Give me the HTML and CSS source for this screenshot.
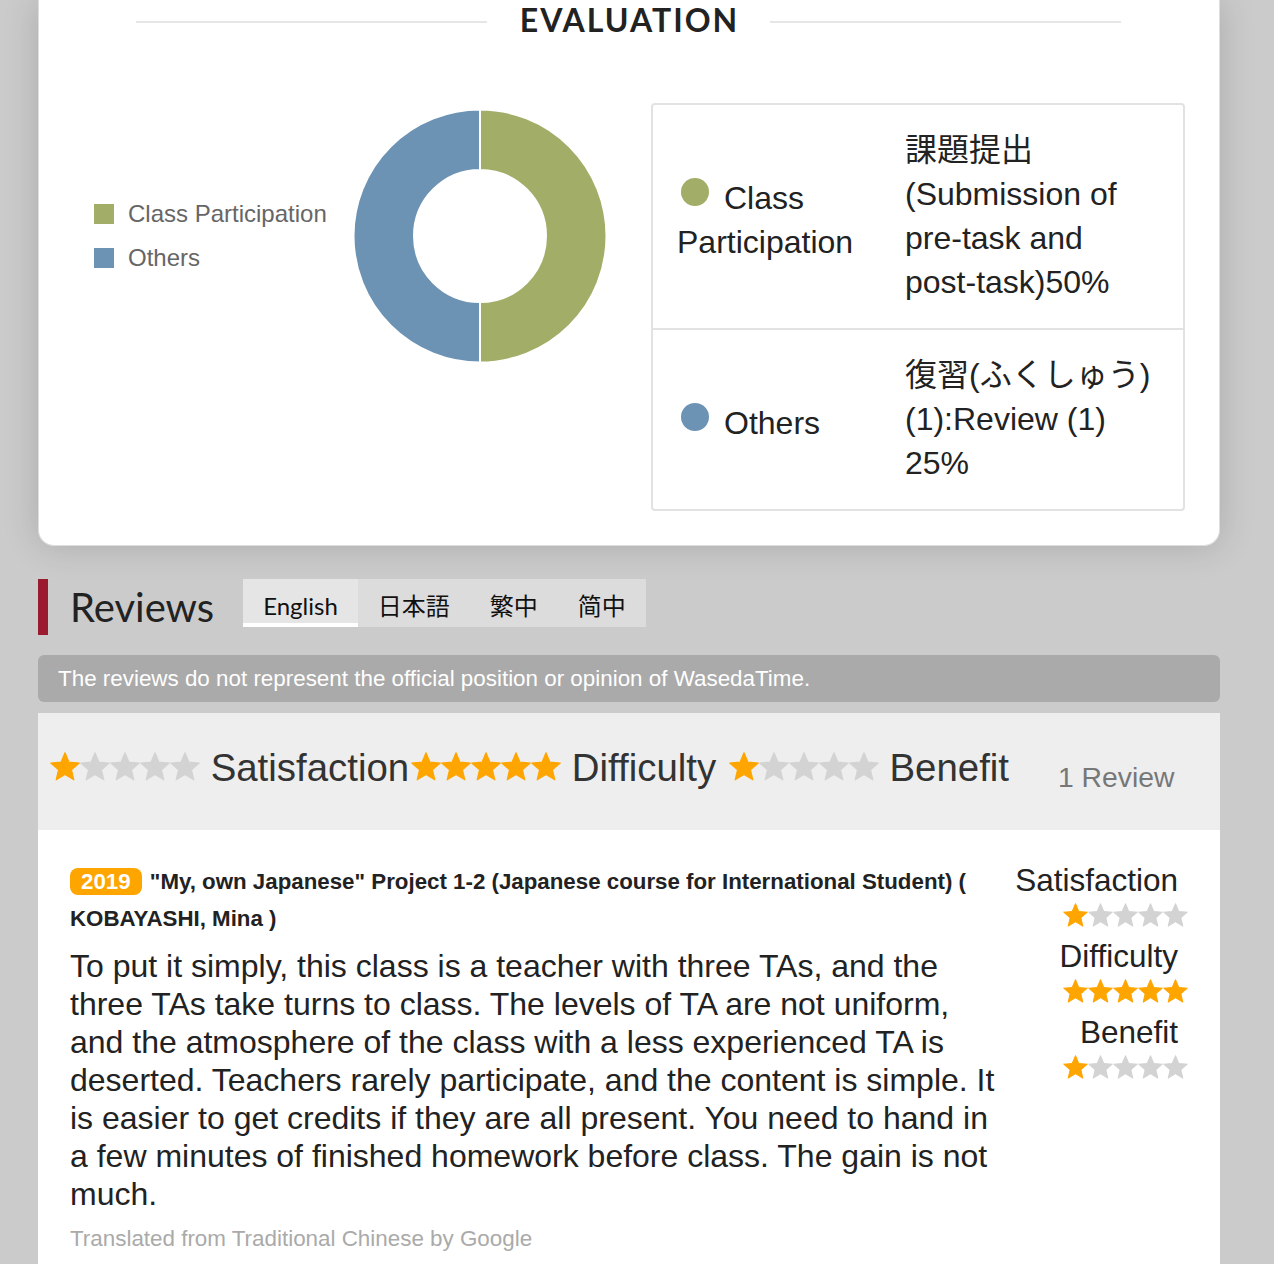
FILE: index.html
```html
<!DOCTYPE html>
<html lang="en">
<head>
<meta charset="utf-8">
<title>Evaluation and Reviews</title>
<link rel="stylesheet" href="styles.css">
</head>
<body>
<svg class="defs" xmlns="http://www.w3.org/2000/svg">
  <symbol id="star" viewBox="1.5 1.5 21 21">
    <path d="M12 17.27L18.18 21l-1.64-7.03L22 9.24l-7.19-.61L12 2 9.19 8.63 2 9.24l5.46 4.73L5.82 21z" stroke="currentColor" stroke-width="0.8" stroke-linejoin="round"/>
  </symbol>
</svg>
<div class="page">
  <section class="card">
    <div class="card-title">
      <span class="rule"></span>
      <h2>EVALUATION</h2>
      <span class="rule"></span>
    </div>
    <div class="eval-body">
      <div class="chart">
        <ul class="legend">
          <li><span class="sw green"></span>Class Participation</li>
          <li><span class="sw blue"></span>Others</li>
        </ul>
        <svg class="donut" width="254" height="254" viewBox="0 0 254 254" xmlns="http://www.w3.org/2000/svg">
          <path d="M127 0.5 A126.5 126.5 0 0 1 127 253.5 L127 193 A66 66 0 0 0 127 61 Z" fill="#a2ad68" stroke="#fff" stroke-width="2"/>
          <path d="M127 0.5 A126.5 126.5 0 0 0 127 253.5 L127 193 A66 66 0 0 1 127 61 Z" fill="#6c93b4" stroke="#fff" stroke-width="2"/>
        </svg>
      </div>
      <div class="eval-table">
        <div class="row">
          <div class="cell-type"><span class="dot green"></span>Class Participation</div>
          <div class="cell-desc">課題提出(Submission of pre-task and post-task)50%</div>
        </div>
        <div class="row">
          <div class="cell-type"><span class="dot blue"></span>Others</div>
          <div class="cell-desc">復習(ふくしゅう)(1):Review (1) 25%</div>
        </div>
      </div>
    </div>
  </section>

  <div class="reviews-head">
    <span class="redbar"></span>
    <h2 class="reviews-title">Reviews</h2>
    <div class="tabs">
      <span class="tab active">English</span>
      <span class="tab">日本語</span>
      <span class="tab">繁中</span>
      <span class="tab">简中</span>
    </div>
  </div>

  <div class="notice">The reviews do not represent the official position or opinion of WasedaTime.</div>

  <div class="summary">
    <div class="sum-main"><span class="stars"><svg class="on"><use href="#star"/></svg><svg><use href="#star"/></svg><svg><use href="#star"/></svg><svg><use href="#star"/></svg><svg><use href="#star"/></svg></span> Satisfaction<span class="stars"><svg class="on"><use href="#star"/></svg><svg class="on"><use href="#star"/></svg><svg class="on"><use href="#star"/></svg><svg class="on"><use href="#star"/></svg><svg class="on"><use href="#star"/></svg></span> Difficulty <span class="stars"><svg class="on"><use href="#star"/></svg><svg><use href="#star"/></svg><svg><use href="#star"/></svg><svg><use href="#star"/></svg><svg><use href="#star"/></svg></span> Benefit</div>
    <div class="count">1 Review</div>
  </div>

  <article class="review">
    <div class="review-main">
      <div class="review-title"><span class="year">2019</span> "My, own Japanese" Project 1-2 (Japanese course for International Student) ( KOBAYASHI, Mina )</div>
      <p class="review-text">To put it simply, this class is a teacher with three TAs, and the three TAs take turns to class. The levels of TA are not uniform, and the atmosphere of the class with a less experienced TA is deserted. Teachers rarely participate, and the content is simple. It is easier to get credits if they are all present. You need to hand in a few minutes of finished homework before class. The gain is not much.</p>
      <div class="translated">Translated from Traditional Chinese by Google</div>
    </div>
    <div class="review-side">
      <div class="label">Satisfaction</div>
      <div class="rstars"><svg class="on"><use href="#star"/></svg><svg><use href="#star"/></svg><svg><use href="#star"/></svg><svg><use href="#star"/></svg><svg><use href="#star"/></svg></div>
      <div class="label">Difficulty</div>
      <div class="rstars"><svg class="on"><use href="#star"/></svg><svg class="on"><use href="#star"/></svg><svg class="on"><use href="#star"/></svg><svg class="on"><use href="#star"/></svg><svg class="on"><use href="#star"/></svg></div>
      <div class="label">Benefit</div>
      <div class="rstars"><svg class="on"><use href="#star"/></svg><svg><use href="#star"/></svg><svg><use href="#star"/></svg><svg><use href="#star"/></svg><svg><use href="#star"/></svg></div>
    </div>
  </article>
</div>
</body>
</html>
```

FILE: styles.css
```css
* { box-sizing: border-box; }

body {
  margin: 0;
  background: #cbcbcb;
  font-family: "Liberation Sans", Arial, "Noto Sans CJK JP", sans-serif;
  color: #222;
}

.defs { display: none; }

.page {
  width: 1182px;
  margin-left: 38px;
  padding-bottom: 40px;
}

/* ---------- evaluation card ---------- */
.card {
  background: #fff;
  border: 1px solid #dedede;
  border-top: 0;
  border-radius: 0 0 16px 16px;
  box-shadow: 0 0 36px rgba(0, 0, 0, 0.16);
}

.card-title {
  display: flex;
  align-items: center;
  height: 40px;
  padding: 0 98px 0 97px;
}

.rule {
  flex: 1;
  height: 2px;
  margin-top: 4px;
  background: #e6e6e6;
}

.card-title h2 {
  margin: 0 31px 0 33px;
  font: 700 32px/40px Lato, "Liberation Sans", sans-serif;
  letter-spacing: 2px;
  color: #222;
}

.eval-body {
  display: flex;
  align-items: flex-start;
  padding: 63px 0 34px 55px;
}

.chart {
  display: flex;
  align-items: center;
  margin-top: 6px;
}

.legend {
  list-style: none;
  margin: 0;
  padding: 0;
  width: 259px;
}

.legend li {
  display: flex;
  align-items: center;
  height: 44px;
  font-size: 24px;
  color: #666;
}

.sw {
  width: 20px;
  height: 20px;
  margin-right: 14px;
}

.green { background: #a2ad68; }
.blue { background: #6c93b4; }

.donut { display: block; }

.eval-table {
  margin-left: 44px;
  width: 534px;
  border: 2px solid #e2e2e2;
  border-radius: 4px;
}

.row {
  display: grid;
  grid-template-columns: 228px 302px;
  align-items: center;
}

.row + .row { border-top: 2px solid #e2e2e2; }

.cell-type,
.cell-desc {
  font-size: 32px;
  line-height: 44px;
  color: #222;
}

.cell-type { padding: 27px 24px 20px; }
.cell-desc { padding: 23px 24px 24px; }

.dot {
  display: inline-block;
  width: 28px;
  height: 28px;
  border-radius: 50%;
  margin: 0 15px 0 4px;
  vertical-align: 3px;
}

/* ---------- reviews header ---------- */
.reviews-head {
  display: flex;
  align-items: flex-start;
  margin-top: 33px;
  height: 56px;
}

.redbar {
  width: 10px;
  height: 56px;
  background: #9a1b2f;
}

.reviews-title {
  margin: 0 29px 0 22px;
  font: 400 40px/56px Lato, "Liberation Sans", sans-serif;
  color: #222;
}

.tabs {
  display: flex;
  height: 48px;
  background: #dcdcdc;
}

.tab {
  height: 48px;
  padding: 6px 20px 0;
  font: 400 24px/42px Lato, "Noto Sans CJK JP", sans-serif;
  color: #111;
}

.tab.active {
  background: #e5e5e5;
  box-shadow: inset 0 -4px 0 #fff;
}

.notice {
  margin-top: 20px;
  height: 47px;
  line-height: 47px;
  padding: 0 20px;
  background: #aaaaaa;
  border-radius: 6px;
  color: #fff;
  font-size: 22.4px;
}

/* ---------- summary ---------- */
.summary {
  margin-top: 11px;
  height: 117px;
  background: #eeeeee;
  display: flex;
  align-items: center;
  padding: 0 0 8px 10px;
  color: #333;
}

.sum-main {
  font-size: 38.4px;
  white-space: nowrap;
}

.stars {
  margin-left: 2px;
}

.stars svg {
  width: 30px;
  height: 30px;
  vertical-align: -1px;
  color: #d3d3d3;
  fill: currentColor;
}

.stars svg.on,
.rstars svg.on { color: #ffa500; }

.count {
  margin-left: 49px;
  margin-top: 20px;
  font-size: 28.3px;
  color: #777;
}

/* ---------- review ---------- */
.review {
  display: flex;
  background: #fff;
  padding: 33px 32px 20px;
}

.review-main {
  width: 932px;
  flex: none;
}

.review-title {
  font-weight: 700;
  font-size: 22.3px;
  line-height: 37px;
  color: #222;
}

.year {
  display: inline-block;
  background: #ffa500;
  color: #fff;
  border-radius: 8px;
  padding: 0 11px;
  line-height: 27px;
  margin-right: 2px;
}

.review-text {
  margin: 10px 0 0;
  font-size: 32px;
  line-height: 38px;
  color: #222;
}

.translated {
  margin-top: 11px;
  font-size: 22.4px;
  line-height: 30px;
  color: #aaa;
}

.review-side {
  flex: 1;
  margin-top: -2px;
  text-align: right;
  font-size: 31.5px;
  line-height: 38px;
  color: #222;
}

.review-side .label { padding-right: 10px; }

.rstars {
  display: flex;
  justify-content: flex-end;
  align-items: flex-start;
  height: 38px;
  padding-top: 4px;
}

.rstars svg {
  width: 25px;
  height: 25px;
  color: #d3d3d3;
  fill: currentColor;
}
```
